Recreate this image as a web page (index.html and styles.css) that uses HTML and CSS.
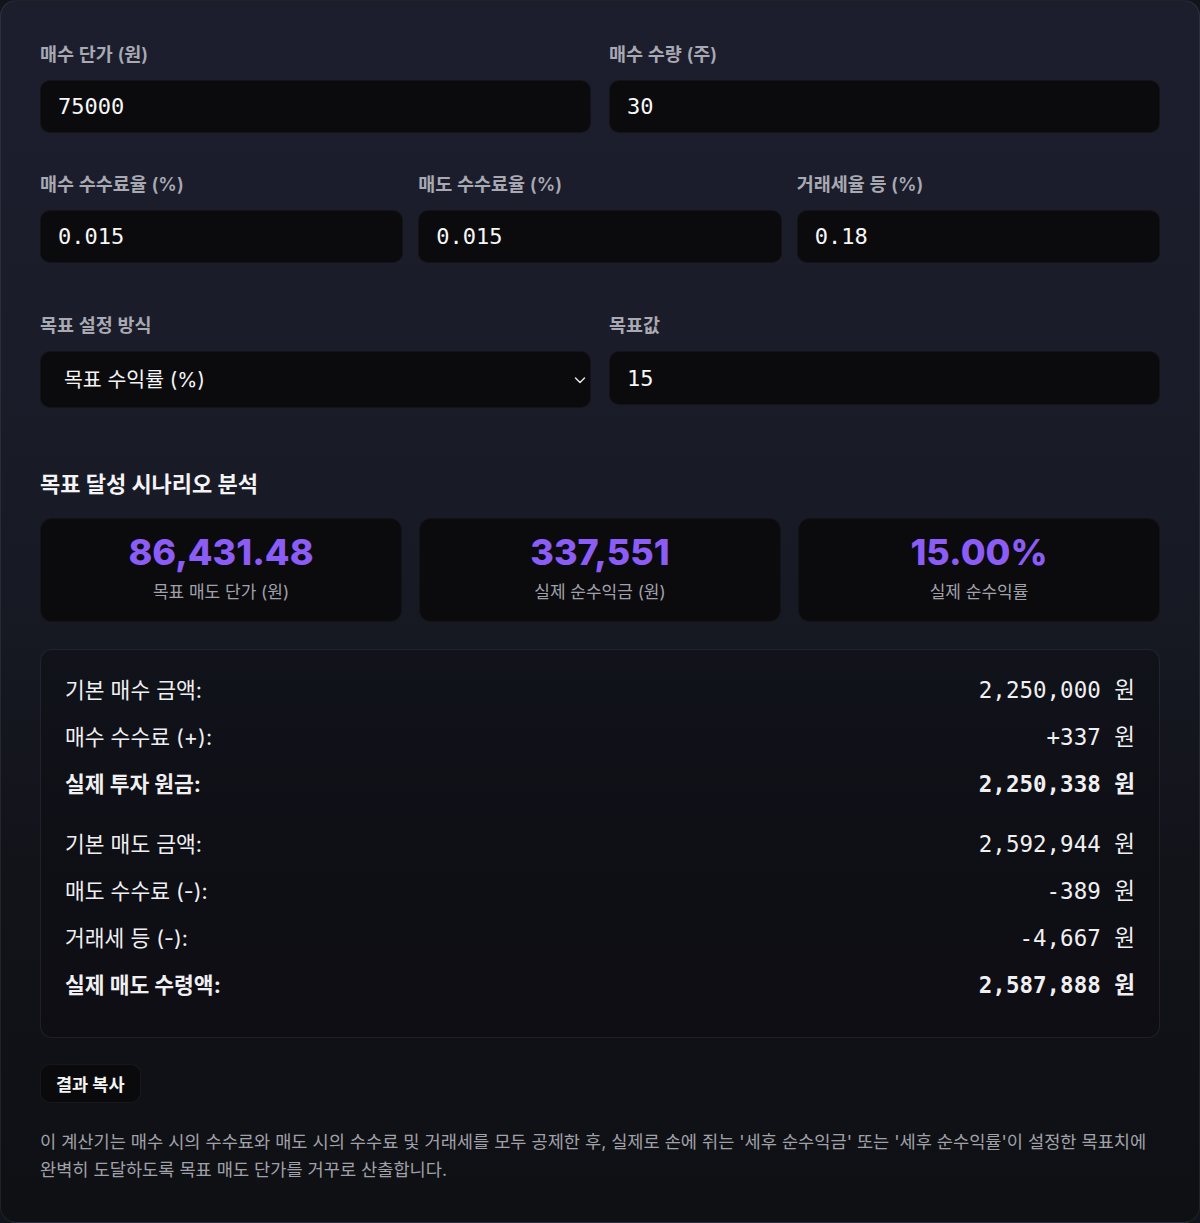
FILE: index.html
```html
<!DOCTYPE html>
<html lang="ko">
<head>
<meta charset="utf-8">
<title>목표 매도 단가 계산기</title>
<link rel="stylesheet" href="styles.css">
</head>
<body>
<div class="card">
  <div class="grid grid-2">
    <div class="field">
      <label class="label">매수 단가 (원)</label>
      <input class="input" type="text" value="75000">
    </div>
    <div class="field">
      <label class="label">매수 수량 (주)</label>
      <input class="input" type="text" value="30">
    </div>
  </div>
  <div class="grid grid-3 row-2">
    <div class="field">
      <label class="label">매수 수수료율 (%)</label>
      <input class="input" type="text" value="0.015">
    </div>
    <div class="field">
      <label class="label">매도 수수료율 (%)</label>
      <input class="input" type="text" value="0.015">
    </div>
    <div class="field">
      <label class="label">거래세율 등 (%)</label>
      <input class="input" type="text" value="0.18">
    </div>
  </div>
  <div class="grid grid-2 row-3">
    <div class="field">
      <label class="label">목표 설정 방식</label>
      <div class="select-wrap">
        <select class="select">
          <option>목표 수익률 (%)</option>
          <option>목표 순수익금 (원)</option>
        </select>
        <svg class="chevron" width="14" height="14" viewBox="0 0 14 14"><path d="M2.5 5 L7 9.5 L11.5 5" fill="none" stroke="#e5e5e5" stroke-width="1.5" stroke-linecap="round" stroke-linejoin="round"/></svg>
      </div>
    </div>
    <div class="field">
      <label class="label">목표값</label>
      <input class="input" type="text" value="15">
    </div>
  </div>

  <h2 class="heading">목표 달성 시나리오 분석</h2>
  <div class="grid grid-3 stats">
    <div class="stat">
      <div class="stat-value">86,431.48</div>
      <div class="stat-label">목표 매도 단가 (원)</div>
    </div>
    <div class="stat">
      <div class="stat-value">337,551</div>
      <div class="stat-label">실제 순수익금 (원)</div>
    </div>
    <div class="stat">
      <div class="stat-value">15.00%</div>
      <div class="stat-label">실제 순수익률</div>
    </div>
  </div>

  <div class="breakdown">
    <div class="group">
      <div class="row"><span>기본 매수 금액:</span><span class="num">2,250,000 원</span></div>
      <div class="row"><span>매수 수수료 (+):</span><span class="num">+337 원</span></div>
      <div class="row strong"><span>실제 투자 원금:</span><span class="num">2,250,338 원</span></div>
    </div>
    <div class="group">
      <div class="row"><span>기본 매도 금액:</span><span class="num">2,592,944 원</span></div>
      <div class="row"><span>매도 수수료 (-):</span><span class="num">-389 원</span></div>
      <div class="row"><span>거래세 등 (-):</span><span class="num">-4,667 원</span></div>
      <div class="row strong"><span>실제 매도 수령액:</span><span class="num">2,587,888 원</span></div>
    </div>
  </div>

  <button class="btn" type="button">결과 복사</button>

  <p class="note">이 계산기는 매수 시의 수수료와 매도 시의 수수료 및 거래세를 모두 공제한 후, 실제로 손에 쥐는 '세후 순수익금' 또는 '세후 순수익률'이 설정한 목표치에 완벽히 도달하도록 목표 매도 단가를 거꾸로 산출합니다.</p>
</div>
</body>
</html>
```

FILE: styles.css
```css
* { box-sizing: border-box; }

html, body {
  margin: 0;
  padding: 0;
  background: #12141c;
}

body {
  font-family: "Inter", "Noto Sans CJK KR", sans-serif;
  color: #f4f4f5;
}

.card {
  width: 1200px;
  min-height: 1223px;
  border: 1px solid rgba(255, 255, 255, 0.08);
  border-radius: 16px;
  padding: 39px 39px 38px;
  background: linear-gradient(180deg, #1c1e2e 0%, #1a1c29 30%, #161822 52%, #121319 72%, #0f1014 100%);
}

.grid { display: grid; }
.grid-2 { grid-template-columns: 1fr 1fr; column-gap: 18px; }
.grid-3 { grid-template-columns: 1fr 1fr 1fr; column-gap: 15px; }

.row-2 { margin-top: 37px; }
.row-3 { margin-top: 48px; align-items: start; }

.field { display: flex; flex-direction: column; }

.label {
  font-size: 18.5px;
  line-height: 28px;
  font-weight: 600;
  color: #a8a9b2;
  margin-bottom: 12px;
}

.input {
  height: 53px;
  background: #0b0b0e;
  border: 1px solid rgba(255, 255, 255, 0.04);
  border-radius: 10px;
  padding: 0 17px;
  font-family: "DejaVu Sans Mono", monospace;
  font-size: 22px;
  color: #f7f7f8;
  outline: none;
}

.row-3 .input { height: 54px; }

.select-wrap { position: relative; }

.select {
  width: 100%;
  height: 57px;
  appearance: none;
  -webkit-appearance: none;
  background: #0b0b0e;
  border: 1px solid rgba(255, 255, 255, 0.04);
  border-radius: 10px;
  padding: 0 23px;
  font-family: "Inter", "Noto Sans CJK KR", sans-serif;
  font-size: 20.5px;
  color: #f4f4f5;
  outline: none;
}

.chevron {
  position: absolute;
  right: 4px;
  top: 22px;
}

.heading {
  margin: 61px 0 0;
  font-size: 22px;
  line-height: 30px;
  font-weight: 700;
  color: #f4f4f5;
}

.stats { margin-top: 19px; column-gap: 17px; }

.stat {
  height: 104px;
  background: #0b0b0e;
  border: 1px solid rgba(255, 255, 255, 0.04);
  border-radius: 12px;
  padding: 11px 12px 0;
  text-align: center;
}

.stat-value {
  font-size: 36px;
  line-height: 44px;
  font-weight: 800;
  color: #8b5cf6;
}

.stat-label {
  margin-top: 6px;
  font-size: 17px;
  line-height: 24px;
  color: #a1a1aa;
}

.breakdown {
  margin-top: 27px;
  height: 389px;
  border: 1px solid rgba(255, 255, 255, 0.08);
  border-radius: 12px;
  padding: 25px 24px 0;
  background: rgba(10, 10, 13, 0.35);
  display: flex;
  flex-direction: column;
  gap: 29px;
}

.group { display: flex; flex-direction: column; gap: 16px; }

.row {
  display: flex;
  justify-content: space-between;
  align-items: center;
  font-size: 21.5px;
  line-height: 31px;
  color: #f0f0f2;
}

.row.strong { font-weight: 700; }

.num {
  font-family: "DejaVu Sans Mono", "Noto Sans CJK KR", monospace;
  font-size: 22.5px;
}

.btn {
  margin-top: 26px;
  height: 39px;
  padding: 0 15px;
  background: #0a0a0c;
  border: 1px solid rgba(255, 255, 255, 0.06);
  border-radius: 10px;
  font-family: "Inter", "Noto Sans CJK KR", sans-serif;
  font-size: 17.5px;
  font-weight: 700;
  color: #f4f4f5;
}

.note {
  margin: 25px 0 0;
  font-size: 17.6px;
  line-height: 28px;
  color: #a1a1aa;
  word-break: keep-all;
}
```
